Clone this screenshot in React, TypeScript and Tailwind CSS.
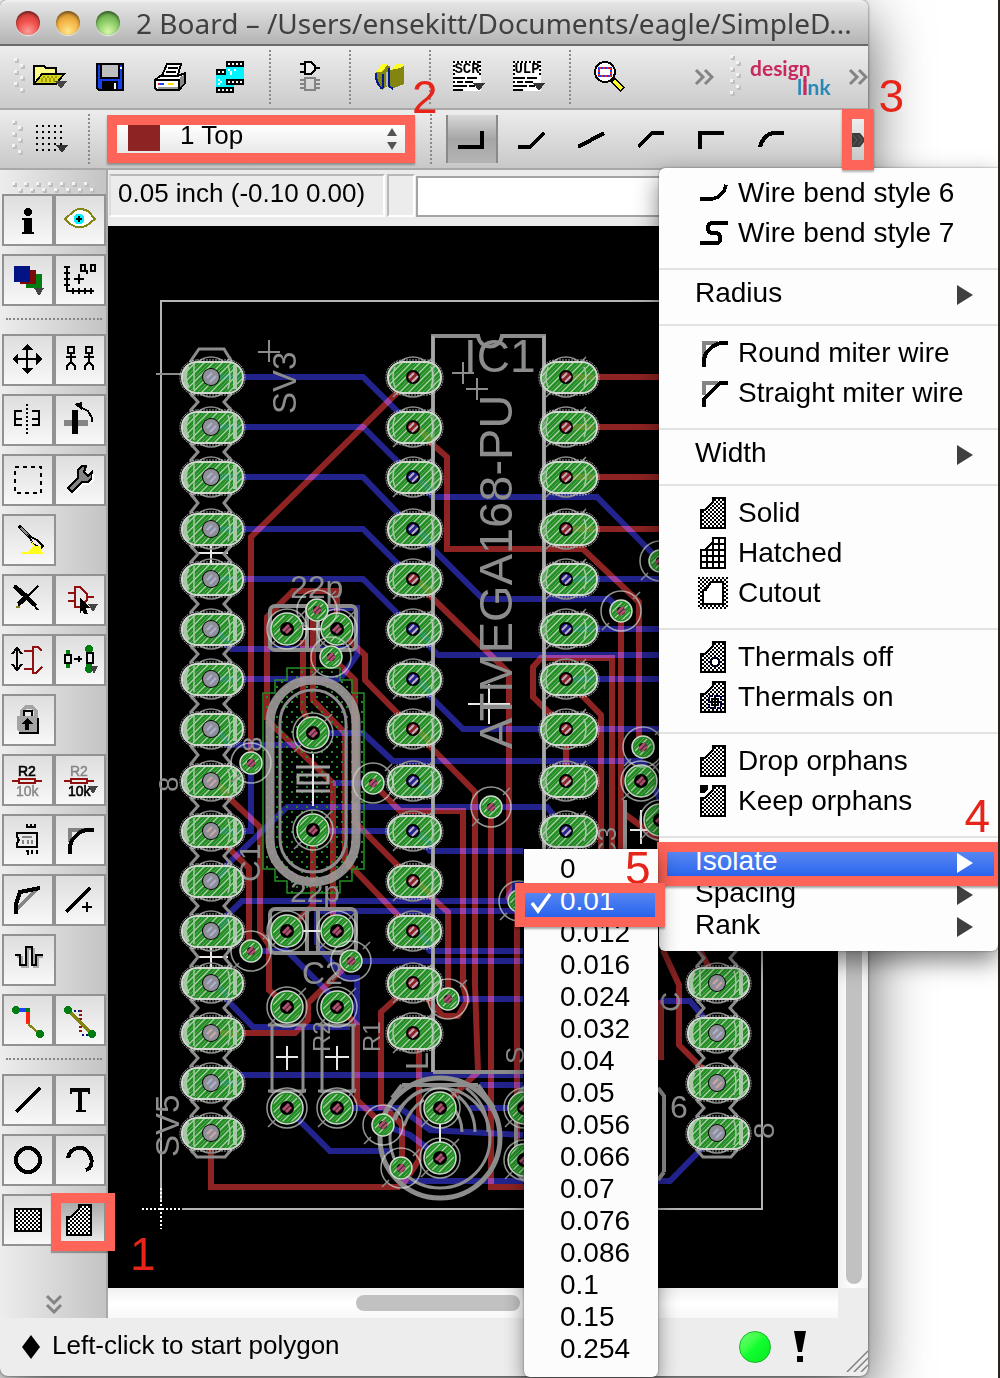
import React from "react";

const BLUE = "#23238e";
const RED = "#8e2323";
const GREEN = "#238e23";
const SILK = "#8c8c8c";
const LIGHT = "#d0d8d0";

function Px({ children, w = 16, h = 16, className = "" }: { children: React.ReactNode; w?: number; h?: number; className?: string }) {
  return (
    <svg width={w * 2} height={h * 2} viewBox={`0 0 ${w} ${h}`} shapeRendering="crispEdges" fill="none" stroke="none" className={className} aria-hidden="true">
      {children}
    </svg>
  );
}

const Drop = () => <path d="M11 12h5l-2.500 4z" fill="#444" />;

/* ---------- top toolbar icons ---------- */

const FolderIcon = () => (
  <Px w={17} h={14}>
    <path d="M.5 10.500V1.500H5.500L6.500 2.500H11.500V5.500" fill="#ffff55" stroke="#000" />
    <path d="M1 10V2H5L6 3H11V5H5z" fill="#ffff88" />
    <path d="M.5 10.500L4.500 5.500H15.500L11.500 10.500z" fill="#d8d820" stroke="#000" />
    <path d="M5 7h1m1 0h1m1 0h1m1 0h1m-8 1h1m1 0h1m1 0h1m1 0h1M4 9h1m1 0h1m1 0h1m1 0h1" stroke="#a0a000" />
    <path d="M11 9h6l-3 4z" fill="#444" />
  </Px>
);
const SaveIcon = () => (
  <Px w={14} h={14}>
    <path d="M.5.5h13v13h-12l-1-1z" fill="#1540f0" stroke="#000" />
    <path d="M3 1h8v6H3z" fill="#c0c0c0" />
    <path d="M2.500 1v6.500h9V1" stroke="#000" />
    <path d="M3 9h8v4H3z" fill="#000" />
    <path d="M9 10h1v3H9z" fill="#fff" />
    <path d="M12 2h1v1h-1z" fill="#fff" />
  </Px>
);
const PrintIcon = () => (
  <Px w={16} h={14}>
    <path d="M3.500 7.500L6.500.5H13.500L11.500 7.500" fill="#fff" stroke="#000" />
    <path d="M7 2.500h5M6 4.500h5M5.500 6.500h4" stroke="#000" />
    <path d="M.5 8.500L3 6.500H12L15.500 5V10L12.500 13.500H1.500L.5 12.500z" fill="#fff" stroke="#000" />
    <path d="M13 7l2-1v4l-2 2z" fill="#888" />
    <path d="M1 8.500h11.500v5" stroke="#000" />
    <path d="M2 10h1v1H2z" fill="#e02020" />
    <path d="M3 10h2v1H3z" fill="#1540f0" />
    <path d="M7 10h3v1H7z" fill="#ffe000" />
    <path d="M2 12.500h10" stroke="#999" />
  </Px>
);
const FilmIcon = () => (
  <Px w={14} h={16}>
    <path d="M5 0h9v3H5zM5 9h9v3H5zM0 4h5v3H0zM0 13h9v3H0z" fill="#000" />
    <path d="M5 3h9v6H5zM0 7h5v6H0zM5 12h4v1H5z" fill="#00f4ff" />
    <path d="M6 1h1v1H6zm2 0h1v1H8zm2 0h1v1h-1zm2 0h1v1h-1zM6 10h1v1H6zm2 0h1v1H8zm2 0h1v1h-1zm2 0h1v1h-1zM1 5h1v1H1zm2 0h1v1H3zM1 14h1v1H1zm2 0h1v1H3zm2 0h1v1H5zm2 0h1v1H7zM6 4h1v1H6zm1 1h1v1H7zm2-1h1v1H9zM1 9h1v1H1zm1 1h1v1H2zm-1 1h1v1H1zm6-5h1v1H7z" fill="#fff" />
  </Px>
);
const GateIcon = () => (
  <Px w={10} h={16}>
    <path d="M0 1.500h3M0 5.500h3M8 3.500h2M2.500.5H5.500L7.500 2.500V4.500L5.500 6.500H2.500z" fill="#eee" stroke="#000" />
    <path d="M2.500 8.500h5v6h-5zM0 9.500h2m-2 2h2m-2 2h2m6-4h2m-2 2h2m-2 2h2" stroke="#848484" />
  </Px>
);
const BooksIcon = () => (
  <Px w={16} h={15}>
    <path d="M1 5L4 1h3v1h1V11L4 14 1 8z" fill="#848410" />
    <path d="M1 5L4 1h3L4 5zM8 4l3-3h4l-2 3z" fill="#ffff22" />
    <path d="M8 4l5-1 2-1v9l-5 2-2-1z" fill="#848410" />
    <path d="M1 5.500V8l1 3 2 2.500M4.500 6v7M7.500 3v9l2 1.500" stroke="#001c8c" />
    <path d="M6 5h1v7H6z" fill="#b8b8b8" />
  </Px>
);
function ScriptIcon({ label }: { label: string }) {
  return (
    <Px w={17} h={16}>
      <path d="M0 0h14v15H0z" fill="#fff" />
      <path d="M.5 0v15M13.500 0v7M0 .5h14" stroke="#000" strokeDasharray="1 1" />
      <text x="7" y="6" textAnchor="middle" fontFamily="Liberation Mono" fontWeight="700" fontSize="7" fill="#000">{label}</text>
      <path d="M1 8.500h5m1 0h5M2 10.500h3m1 0h4M1 12.500h6m1 0h3M1 14.500h4" stroke="#000" />
      <path d="M10 11h6l-3 4z" fill="#333" />
    </Px>
  );
}
const MagnifierIcon = () => (
  <Px w={16} h={16}>
    <circle cx="5.500" cy="5.500" r="5" fill="#fff" stroke="#000" />
    <path d="M2.500 3.500h6v4h-6z" stroke="#1540f0" />
    <path d="M2.500 3.500h6v4h-6z" stroke="#f02020" strokeDasharray="1 1" />
    <path d="M9 9l5.500 5.500" stroke="#000" strokeWidth="3.500" />
    <path d="M10 10l4 4" stroke="#ffff22" strokeWidth="1.800" />
  </Px>
);

function Chevrons({ down = false }: { down?: boolean }) {
  return (
    <svg width={20} height={20} viewBox="0 0 20 20" fill="none" stroke="#848484" strokeWidth="3" className={down ? "rotate-90" : ""} aria-hidden="true">
      <path d="M2 3l7 7-7 7M11 3l7 7-7 7" />
    </svg>
  );
}

function Grip({ rows = 6 }: { rows?: number }) {
  return (
    <svg width={12} height={rows * 6 + 2} viewBox={`0 0 12 ${rows * 6 + 2}`} aria-hidden="true">
      {Array.from({ length: rows }, (_, i) => (
        <g key={i}>
          <rect x={i % 2 ? 7 : 1} y={i * 6 + 1} width="4" height="4" fill="#c0c0c0" />
          <rect x={i % 2 ? 6 : 0} y={i * 6} width="3" height="3" fill="#f4f4f4" />
        </g>
      ))}
    </svg>
  );
}

const VSep = () => (
  <div className="flex w-5 shrink-0 justify-center self-stretch py-1">
    <div className="w-0 border-l-2 border-dotted border-[#8a8a8a]" />
  </div>
);

/* ---------- wire bend icons ---------- */

const bends: { name: string; d: string }[] = [
  { name: "Wire bend style 0", d: "M0 9H12V1" },
  { name: "Wire bend style 1", d: "M0 9H6L13 2" },
  { name: "Wire bend style 2", d: "M0 9L13 2" },
  { name: "Wire bend style 3", d: "M0 9L7 2H13" },
  { name: "Wire bend style 4", d: "M1 10V2H13" },
  { name: "Wire bend style 5", d: "M1 9C2 5 5 2 8 2H13" },
];
function Bend({ d }: { d: string }) {
  return (
    <Px w={14} h={10}>
      <path d={d} stroke="#000" strokeWidth="2" />
    </Px>
  );
}

/* ---------- palette icons ---------- */

const Checker = ({ id }: { id: string }) => (
  <pattern id={id} width="2" height="2" patternUnits="userSpaceOnUse">
    <rect width="2" height="2" fill="#fff" />
    <path d="M0 0h1v1H0zM1 1h1v1H1z" fill="#000" />
  </pattern>
);
const POLY = "M6.500 .5H12.500V15.500H.5V6.500H2.500L6.500 2.500z";

const palette: Record<string, React.ReactNode> = {
  info: <><circle cx="8" cy="4" r="2" fill="#000" /><path d="M5 7h5v7h1v1H5v-1h1V8H5z" fill="#000" /></>,
  show: <><path d="M.5 7.500L5 3.500L7 2.500H9L12 3.500L15.500 7.500L11 11L9 11.500H6L3 10z" fill="#fff" stroke="#848410" /><circle cx="7.500" cy="7.500" r="2.700" fill="#00f0ff" /><path d="M6 7.500h3M7.500 6v3" stroke="#000" /></>,
  display: <><path d="M7 5h8v7H7z" fill="#007c10" /><path d="M4 3h8v7H4z" fill="#7c0808" /><path d="M1 1h8v8H1z" fill="#001484" /><Drop /></>,
  mark: <><path d="M1.500 1v13M1 13.500h14M0 1.500h3M0 4.500h3M0 7.500h3M0 10.500h3M4.500 12v3M7.500 12v3M10.500 12v3M13.500 12v3M5 7.500h5M7.500 5v5M8.500.5h2v3h-2zM13.500.5h2v3h-2zM11.500 3v2" stroke="#000" /></>,
  move: <><path d="M7.500 2v11M2 7.500h11" stroke="#000" /><path d="M7.500 0l3 3h-6zM7.500 15l3-3h-6zM0 7.500l3-3v6zM15 7.500l-3-3v6z" fill="#000" /></>,
  copy: <>{[3, 12].map((x) => <path key={x} d={`M${x - 1} 1.500h3v3h-3zM${x - 2} 6.500h5M${x + 0.5} 5v4M${x + 0.5} 9l-2 2v2M${x + 0.5} 9l2 2v2`} stroke="#000" />)}</>,
  mirror: <><path d="M5 3.500H1.500V10.500H5M2 7.500h3M10 3.500H13.500V10.500H10M13 7.500h-3" stroke="#000" /><path d="M7.500 0v15" stroke="#000" strokeDasharray="1 1" /></>,
  rotate: <><path d="M0 8h12v3H0z" fill="#848484" /><path d="M4 3h3v12H4z" fill="#000" /><path d="M8 1.500L12 3.500L14 7V9" stroke="#000" /><path d="M5 0l4-1v4z" fill="#000" /></>,
  group: <path d="M1.500 1.500h13v13h-13z" stroke="#000" strokeDasharray="2 2" />,
  change: <><path d="M2 12L7 7V3L9 1H11L10 4L12 6L14 4V7L12 9H9L4 14z" fill="#848484" stroke="#000" /><path d="M14.500 5v3l-2 2h-3l-5 5" stroke="#fff" /></>,
  cut: <><path d="M3 1l6 6" stroke="#000" strokeWidth="2" /><path d="M4 2l4 4" stroke="#888" /><path d="M8 6l4 2 3 3-1 1-4-2z" stroke="#000" /><path d="M9 8l2 3h3v3h1v1H4v-1h3l3-3z" fill="#ffff22" /></>,
  del: <><path d="M2 1l6 5 5-5M13 13L8 7l-5 4" stroke="#000" /><path d="M1 1l11 10M3 10l4-4" stroke="#000" strokeWidth="2" /><path d="M2 11h2v1H2z" fill="#848410" /></>,
  add: <><path d="M2 4.500h3M2 8.500h3M12 6.500h3M5.500 1.500H8L11.500 5V8L8 11.500H5.500z" stroke="#901010" /><path d="M8 7l5 5h-2l1 3h-2l-1-2-1 2z" fill="#000" /><path d="M12 10h5l-2.500 4z" fill="#444" /></>,
  pinswap: <><path d="M2.500 3v9M0 5l2.500-3 2.500 3M0 10l2.500 3 2.500-3" stroke="#000" /><path d="M6 3.500h4M6 12.500h4M10.500 1v13M10 1.500h3l2 2M10 14.500h2l3-3" stroke="#901010" /></>,
  replace: <><path d="M1 3h2v9H1zM11 1h3v13h-3z" fill="#007c10" /><circle cx="12.500" cy="2.500" r="2" fill="#007c10" /><circle cx="12.500" cy="12.500" r="2" fill="#007c10" /><path d="M.5 5.500h3v4h-3zM11.500 4.500h3v5h-3z" fill="#eee" stroke="#000" /><path d="M5 7.500h4M7.500 6v3" stroke="#000" /><path d="M13 11h4l-2 4z" fill="#444" /></>,
  lock: <><path d="M3 7h10v8H3z" fill="#000" /><path d="M4.500 7V3.500l2-2h3l2 2V7" stroke="#a4a4a4" strokeWidth="2" /><path d="M2 6h10v8H3l-1-1z" fill="#a4a4a4" /><path d="M5.500 6V3.500H9.500V6" stroke="#000" /><path d="M6 8h2v5H6z" fill="#000" /><path d="M4 10l3-3 3 3z" fill="#000" /></>,
  name: <><text x="3" y="6" fontFamily="Liberation Sans" fontSize="7" fill="#000" stroke="#000" strokeWidth=".3">R2</text><path d="M0 8.500h3M12 8.500h3M3.500 7.500h8v2h-8z" stroke="#901010" /><text x="2" y="16" fontFamily="Liberation Sans" fontSize="7" fill="#848484" stroke="#848484" strokeWidth=".2">10k</text></>,
  value: <><text x="3" y="6" fontFamily="Liberation Sans" fontSize="7" fill="#848484" stroke="#848484" strokeWidth=".2">R2</text><path d="M0 8.500h3M12 8.500h3M3.500 7.500h8v2h-8z" stroke="#901010" /><text x="2" y="16" fontFamily="Liberation Sans" fontSize="7" fill="#000" stroke="#000" strokeWidth=".3">10k</text><path d="M12 11h5l-2.500 4z" fill="#444" /></>,
  smash: <><path d="M2.500 4.500H12.500V11.500H2.500V9.500L3.500 8L2.500 6.500zM7.500 0v1.500h4V0M9.500 0v2M7 13.500h1v2M10 13v2M12.500 13v2" stroke="#000" /><path d="M5 6.500h5M5.500 8v2M8 8v2M10 8v2" stroke="#848484" /></>,
  miter: <><path d="M3 9V3H10" stroke="#848484" strokeWidth="2" /><path d="M3 15V11L4 8L8 4L11 3H15" stroke="#000" strokeWidth="2" /></>,
  split: <><path d="M2 13L13 2" stroke="#848484" strokeWidth="2" /><path d="M2 15V10L4 4L14 2" stroke="#000" strokeWidth="2" /></>,
  optimize: <><path d="M1 14L13 2" stroke="#000" strokeWidth="2" /><path d="M9 11.500h5M11.500 9v5" stroke="#000" /></>,
  meander: <><path d="M2 6.500H4.500V11.500H7.500V2.500H10.500V11.500H12.500V6.500H15" stroke="#aaa" /><path d="M1 5.500H3.500V10.500H6.500V1.500H9.500V10.500H11.500V5.500H15" stroke="#000" /></>,
  route: <><path d="M2 3h6" stroke="#2040ff" strokeWidth="2" /><path d="M8 4v6" stroke="#ff2010" strokeWidth="2" /><path d="M8 10l6 5" stroke="#848410" strokeWidth="1.200" /><circle cx="2" cy="3" r="2" fill="#007c10" /><circle cx="14" cy="15" r="2" fill="#007c10" /><path d="M7 2h2v2H7z" fill="#007c10" /></>,
  ripup: <><path d="M3 3.500h5" stroke="#001484" strokeDasharray="1 1" /><path d="M8 3v12" stroke="#901010" strokeWidth="1.500" strokeDasharray="1 1" /><path d="M9 15.500h4" stroke="#001484" strokeDasharray="1 1" /><path d="M2 3l12 12" stroke="#848410" strokeWidth="1.500" /><circle cx="2" cy="3" r="2" fill="#007c10" /><circle cx="14" cy="15" r="2" fill="#007c10" /></>,
  wire: <path d="M2 14L14 2" stroke="#000" strokeWidth="2" />,
  text: <path d="M3 2h10v3h-1V4H9v9h2v1H6v-1h1V4H4v1H3z" fill="#000" />,
  circle: <circle cx="8" cy="8" r="6" stroke="#000" strokeWidth="2" />,
  arc: <path d="M2 7C3 2 9 0 12 4S14 12 11 13" stroke="#000" strokeWidth="2" />,
  rect: <><defs><Checker id="chk-rect" /></defs><path d="M1.500 2.500h13v11h-13z" fill="url(#chk-rect)" stroke="#000" /></>,
  polygon: <><defs><Checker id="chk-tool" /></defs><g transform="translate(1 0)"><path d={POLY} fill="url(#chk-tool)" stroke="#000" /></g></>,
};

type Row = [string, string | null] | "sep";
const rows: Row[] = [
  ["info", "show"], ["display", "mark"], "sep",
  ["move", "copy"], ["mirror", "rotate"], ["group", "change"], ["cut", null],
  ["del", "add"], ["pinswap", "replace"], ["lock", null], ["name", "value"],
  ["smash", "miter"], ["split", "optimize"], ["meander", null], ["route", "ripup"], "sep",
  ["wire", "text"], ["circle", "arc"], ["rect", "polygon"],
];

function ToolButton({ name }: { name: string }) {
  const active = name === "polygon";
  return (
    <button type="button" aria-label={name} aria-pressed={active}
      className={`relative flex h-[52px] flex-1 items-center justify-center border-2 border-[#929292] ${active ? "bg-gradient-to-b from-[#a0a0a0] to-[#ededed]" : "bg-gradient-to-b from-[#dedede] to-[#f8f8f8]"}`}>
      <Px className="overflow-visible">{palette[name]}</Px>
      {active && <span className="pointer-events-none absolute -bottom-[7px] -left-[5px] -right-[11px] -top-[3px] z-10 border-[10px] border-[#ff6459] shadow-[0_2px_1px_rgba(0,0,0,.3)]" />}
      {active && <span className="pointer-events-none absolute left-[74px] top-[35px] z-10 text-[46px] leading-none text-[#e6241a]">1</span>}
    </button>
  );
}

/* ---------- board drawing ---------- */

const headerY = [377, 427, 477, 529, 579, 629, 679, 729, 781, 831, 881, 931, 983, 1033, 1083, 1133];

const blueTraces = [
  "211,377 363,377 413,427", "211,427 363,427 413,477", "211,477 363,477 413,529", "211,529 363,529 413,579", "211,579 363,579 413,629",
  "413,477 433,497 597,497 660,561", "413,529 483,599 609,599 621,611", "413,629 438,655 670,655", "413,679 463,729 670,729",
  "211,629 231,649 350,649", "211,679 340,679 357,655 357,608 317,608", "211,729 228,745 300,745", "211,831 251,831 251,763",
  "211,881 232,860 287,807 547,807 566,831", "211,931 242,901 520,901", "317,945 317,911 515,911", "317,945 345,978 357,978 357,1025",
  "211,983 253,1027 350,1027", "211,1083 232,1075 523,1075", "287,1108 330,1151 390,1151", "337,1108 400,1108 430,1130 523,1135",
  "313,733 363,733 393,761 643,761", "333,783 373,783", "313,831 413,831 430,851 523,851", "251,951 287,951 337,1001",
  "413,931 430,951 523,951", "351,961 523,961", "448,999 523,999", "566,579 670,579", "566,629 670,629", "566,679 670,679",
  "383,1125 410,1135 430,1150", "480,1085 523,1085", "401,1181 523,1181", "640,1181 670,1181 717,1133", "470,1108 523,1108", "643,761 660,800",
  "660,1001 690,1001 717,1033", "506,901 515,885 523,885",
];
const redTraces = [
  "413,377 251,537 251,763", "413,427 447,457 447,549 583,549 639,602 639,747", "621,611 621,850", "413,579 509,673 509,900",
  "566,679 601,715 601,850", "566,729 533,697 533,667 541,658 612,658 612,850", "566,377 670,377", "566,427 670,427", "566,477 670,477", "566,529 670,529",
  "413,729 475,792 475,985 478,1072 440,1108", "491,807 491,1187 530,1187", "211,1133 211,1187 400,1187", "373,783 400,811 463,811 463,985 467,1001 458,1016 443,1016 413,983",
  "331,657 355,680 355,822 413,881 448,912 448,999", "313,610 313,700 345,733 345,860 413,931", "267,720 333,783 333,931",
  "267,720 267,617 293,591 337,591 337,629", "303,640 303,710 313,733", "337,629 365,655 365,680 413,729",
  "313,831 313,905 287,931", "211,781 260,827 260,932 269,945 269,990 287,1005", "211,831 249,868 249,951", "211,1033 295,1033 308,1020 308,1003 351,961",
  "337,1005 357,1025 357,1100 383,1125", "381,1110 381,1012 413,983", "419,1033 419,1160 401,1187", "383,1105 402,1125 402,1168",
  "517,900 517,1140", "663,950 679,985 679,1045 717,1083", "661,1000 661,1060", "700,950 717,983", "566,729 566,781", "622,812 660,840",
];

/* short stubs of copper that show through a pad: direction in which the trace leaves it */
const exits: Record<string, string> = { right: "h24", down: "l14 14", up: "l14 -14" };

function LongPad({ x, y, w, tint, big, exit, copper }: { x: number; y: number; w: number; tint: string; big?: boolean; exit?: string; copper?: string }) {
  const l = big ? x - 29 : x - 25;
  return (
    <g>
      <ellipse cx={x} cy={y} rx="20" ry="20" fill="none" stroke={SILK} strokeWidth="1.500" />
      <path d={`M${x - 20} ${y + 20}l6-6M${x + 14} ${y - 14}l6-6`} stroke={SILK} strokeWidth="1.500" />
      <rect x={l} y={y - 15} width={w} height="30" rx="14" fill={GREEN} />
      {exit && <path d={`M${x + 4} ${y}${exits[exit]}`} stroke={copper} strokeWidth="6" fill="none" />}
      <rect x={l} y={y - 15} width={w} height="30" rx="14" fill="url(#hatch)" />
      {big && (
        <g fill="none" stroke="#a8c8a8">
          <path d={`M${l + 6} ${y - 11}Q${l} ${y} ${l + 6} ${y + 11}`} strokeWidth="4" />
          <path d={`M${l + w - 8} ${y - 12}V${y + 12}`} strokeWidth="4" />
          <path d={`M${l + 12} ${y - 13}V${y + 13}M${x + 17} ${y - 12}Q${x + 21} ${y} ${x + 17} ${y + 12}`} strokeWidth="1.500" />
        </g>
      )}
      {!big && <path d={`M${x - 18} ${y - 10}Q${x - 22} ${y} ${x - 18} ${y + 10}M${x + 18} ${y - 10}Q${x + 22} ${y} ${x + 18} ${y + 10}`} fill="none" stroke="#a8c8a8" strokeWidth="1.500" />}
      <rect x={l} y={y - 15} width={w} height="31" rx="15" fill="none" stroke={LIGHT} strokeWidth="2" />
      <rect x={l - 2} y={y - 17} width={w + 4} height="35" rx="17" fill="none" stroke={LIGHT} strokeOpacity=".8" strokeWidth="1" strokeDasharray="2 1" />
      <circle cx={x} cy={y} r={big ? 9 : 7} fill="#000" />
      <circle cx={x} cy={y} r={big ? 8 : 5} fill={big ? "#909098" : tint} />
      <path d={`M${x - 4} ${y + 1}l5-5M${x - 1} ${y + 5}l6-6`} stroke={big ? tint : "#c0b0c0"} strokeWidth="2" />
    </g>
  );
}

function RoundPad({ x, y, via }: { x: number; y: number; via?: boolean }) {
  const r = via ? 11 : 16;
  return (
    <g>
      <circle cx={x} cy={y} r={r + (via ? 9 : 4)} fill="none" stroke={LIGHT} strokeOpacity=".7" strokeWidth="1.500" />
      <circle cx={x} cy={y} r={r} fill={GREEN} stroke={LIGHT} strokeWidth="1.500" />
      <circle cx={x} cy={y} r={r - 2} fill="url(#hatch)" />
      <circle cx={x} cy={y} r={via ? 4 : 7} fill="#000" />
      <path d={`M${x - 4} ${y + 2}l6-6M${x - 1} ${y + 4}l5-5`} stroke="#b05070" strokeWidth="3" />
      <path d={`M${x - 19} ${y + 19}l7-7M${x + 12} ${y - 12}l7-7`} stroke={SILK} strokeWidth="1.500" />
    </g>
  );
}

function Waists({ x, ys }: { x: number; ys: number[] }) {
  return (
    <g fill="none" stroke={SILK} strokeWidth="3">
      {ys.slice(0, -1).map((y, i) => {
        const n = ys[i + 1];
        const m = (y + n) / 2;
        return <path key={y} d={`M${x - 21} ${y + 16}L${x - 13} ${m}L${x - 21} ${n - 16}M${x + 21} ${y + 16}L${x + 13} ${m}L${x + 21} ${n - 16}`} />;
      })}
      <path d={`M${x - 21} ${ys[0] - 15}L${x - 12} ${ys[0] - 28}H${x + 13}L${x + 21} ${ys[0] - 15}M${x - 21} ${ys[ys.length - 1] + 16}L${x - 14} ${ys[ys.length - 1] + 24}H${x + 14}L${x + 21} ${ys[ys.length - 1] + 16}`} />
    </g>
  );
}

function Silk({ x, y, size, children, up = true }: { x: number; y: number; size: number; children: string; up?: boolean }) {
  return (
    <text transform={up ? `translate(${x} ${y}) rotate(-90)` : `translate(${x} ${y})`} fontFamily="Liberation Sans" fontSize={size} fill={SILK}>
      {children}
    </text>
  );
}

const TEAL = "#23905a";
const OLIVE = "#5a9023";

function Board() {
  return (
    <svg viewBox="108 226 730 1062" preserveAspectRatio="xMinYMin slice" className="absolute inset-0 h-full w-full bg-black" role="img" aria-label="Board layout">
      <defs>
        <pattern id="hatch" width="9" height="9" patternUnits="userSpaceOnUse">
          <path d="M-1 10L10 -1M-1 1L1 -1M8 10L10 8" stroke="#b0d0b0" strokeWidth="1.300" />
          <path d="M4 10L10 4M-1 6L6 -1" stroke="#58a858" strokeWidth="1" />
        </pattern>
        <pattern id="dots" width="10" height="10" patternUnits="userSpaceOnUse">
          <path d="M1 1h2v2H1zM6 6h2v2H6z" fill={GREEN} />
        </pattern>
      </defs>
      <path d="M161 1200V301H762V1209H182" fill="none" stroke="#b4b4b4" strokeWidth="2" />
      <path d="M142 1209H182M161 1188V1229" stroke="#fff" strokeWidth="2" strokeDasharray="2 2" />

      <g fill="none" strokeWidth="6" style={{ mixBlendMode: "screen" }}>
        {blueTraces.map((p) => <polyline key={p} points={p} stroke={BLUE} />)}
      </g>
      <g fill="none" strokeWidth="6" style={{ mixBlendMode: "screen" }}>
        {redTraces.map((p) => <polyline key={p} points={p} stroke={RED} />)}
      </g>

      <path d="M287 668h53v12h12v13h12v176h-12v12h-12v12h-53v-12h-12v-12h-12V693h12v-13h12z" fill="url(#dots)" stroke={GREEN} strokeWidth="1.500" />
      <rect x="270" y="680" width="86" height="202" rx="43" fill="none" stroke="#a09a9a" strokeWidth="9" strokeOpacity=".9" />
      <rect x="280" y="690" width="66" height="182" rx="33" fill="none" stroke={SILK} strokeWidth="3" />
      <path d="M296 767h34M296 791h34M298 775h30v8h-30z" fill="none" stroke="#a0a0a0" strokeWidth="3" />

      <g fill="none" stroke={SILK} strokeWidth="4">
        <path d="M433 1072V336H478C480 350 500 350 502 336H544V860M433 1072H540" />
        <rect x="270" y="606" width="86" height="44" rx="5" />
        <rect x="270" y="909" width="86" height="44" rx="5" />
        <path d="M307 606v44M318 606v44M307 909v44M318 909v44" />
        <path d="M272 1025v68M303 1025v68M322 1025v68M353 1025v68M268 1025h38M318 1025h38M268 1091h38M318 1091h38" strokeWidth="3" />
        <path d="M402 1085H478M392 1098L402 1085M478 1085L494 1108" strokeWidth="4" />
        <circle cx="440" cy="1138" r="60" strokeWidth="5" />
        <circle cx="440" cy="1138" r="50" strokeWidth="3" />
        <path d="M458 1096q17 14 17 36M466 1088q22 16 22 44M452 1106q10 12 10 26M395 1120q10-24 28-30M404 1126q6-18 20-26" strokeWidth="3" />
        <path d="M516 1172V1096l10-10M664 1172V1096l-6-8M516 1172l10 10M664 1172l-6 8M625 800v50" />
        <path d="M156 374h26M258 352h22M269 340v22M452 373h22M463 362v22M466 389h22M477 378v22" strokeWidth="2" />
      </g>
      <g stroke="#e8e8e8" strokeWidth="2" fill="none">
        <path d="M300 629h22M211 540v28M196 553h32M302 931h22M211 942v28M198 957h30M287 1046v24M276 1057h22M337 1046v24M325 1057h24M468 704h42M489 684v40M440 1120v30M630 830h22M641 810v34M313 754v52" />
      </g>

      <Waists x={211} ys={headerY} />
      <Waists x={717} ys={[933, 983, 1033, 1083, 1133]} />

      <Silk x={296} y={414} size={33}>SV3</Silk>
      <Silk x={179} y={1157} size={33}>SV5</Silk>
      <Silk x={178} y={792} size={28}>8</Silk>
      <Silk x={774} y={1139} size={30}>8</Silk>
      <Silk x={670} y={1118} size={32} up={false}>6</Silk>
      <Silk x={464} y={372} size={46} up={false}>IC1</Silk>
      <Silk x={512} y={749} size={47}>ATMEGA168-PU</Silk>
      <Silk x={290} y={598} size={32} up={false}>22p</Silk>
      <Silk x={290} y={902} size={30} up={false}>22p</Silk>
      <Silk x={302} y={984} size={32} up={false}>C2</Silk>
      <Silk x={330} y={1052} size={24}>R2</Silk>
      <Silk x={380} y={1052} size={24}>R1</Silk>
      <Silk x={262} y={752} size={28}>8</Silk>
      <Silk x={260} y={882} size={30}>C1</Silk>
      <Silk x={428} y={1070} size={32}>L1</Silk>
      <Silk x={616} y={860} size={26}>C3</Silk>
      <Silk x={524} y={1064} size={26}>S</Silk>
      <Silk x={680} y={1012} size={28}>C</Silk>

      {headerY.map((y, i) => (
        <LongPad key={y} x={211} y={y} w={61} big tint={[8, 9, 13, 15].includes(i) ? "#d0a8a8" : "#b0b0d8"}
          exit={[0, 1, 2, 3, 4, 6, 9, 13, 14].includes(i) ? "right" : [10, 11].includes(i) ? "up" : i === 15 ? undefined : "down"} copper={[8, 13].includes(i) ? OLIVE : TEAL} />
      ))}
      {headerY.slice(0, 14).map((y, i) => (
        <LongPad key={y} x={413} y={y} w={53} tint={[2, 3, 5, 6, 8, 9].includes(i) ? BLUE : RED} exit={i > 0 && i < 12 ? "down" : undefined} copper={[1, 4, 7, 10].includes(i) ? OLIVE : TEAL} />
      ))}
      {headerY.slice(0, 10).map((y, i) => (
        <LongPad key={y} x={566} y={y} w={56} tint={[4, 5, 9].includes(i) ? BLUE : RED} exit={i < 7 ? "right" : undefined} copper={i < 4 ? OLIVE : TEAL} />
      ))}
      {[983, 1033, 1083, 1133].map((y, i) => <LongPad key={y} x={717} y={y} w={61} big tint={i % 2 ? "#b0b0d8" : "#d0a8a8"} />)}

      {[[287, 629], [337, 629], [313, 733], [313, 830], [287, 931], [337, 931], [287, 1007], [337, 1007], [287, 1108], [337, 1108], [440, 1108], [440, 1158], [641, 781], [660, 820], [524, 1108], [524, 1160]].map(([x, y]) => (
        <RoundPad key={`${x}-${y}`} x={x} y={y} />
      ))}
      {[[317, 610], [331, 657], [251, 763], [373, 783], [251, 951], [351, 961], [448, 999], [491, 807], [621, 611], [643, 747], [383, 1125], [401, 1168], [660, 561], [519, 901]].map(([x, y]) => (
        <RoundPad key={`${x}-${y}`} x={x} y={y} via />
      ))}
      <path d="M433 336V1072M544 336V860" stroke="#d0d0d0" strokeOpacity=".4" strokeWidth="3" />
    </svg>
  );
}

/* ---------- menus ---------- */

function PolyIcon({ kind }: { kind: string }) {
  const id = `poly-${kind}`;
  return (
    <Px w={15} h={16}>
      <defs>
        <Checker id={id} />
        <pattern id={`${id}-grid`} width="3" height="3" patternUnits="userSpaceOnUse">
          <rect width="3" height="3" fill="#fff" />
          <path d="M0 .5h3M.5 0v3" stroke="#000" />
        </pattern>
      </defs>
      {kind === "cutout" ? (
        <>
          <rect width="15" height="16" fill={`url(#${id})`} />
          <path d="M6.500 2.500H12.500V13.500H2.500V6.500H4z" fill="#fff" stroke="#000" />
        </>
      ) : (
        <path d={POLY} transform="translate(1 0)" fill={kind === "hatched" ? `url(#${id}-grid)` : `url(#${id})`} stroke="#000" />
      )}
      {kind === "off" && <><circle cx="8.500" cy="10.500" r="2" fill="#fff" stroke="#000020" /><path d="M5 10.500h2m3 0h2M8.500 7v2m0 3v2" stroke="#000020" /></>}
      {kind === "on" && <><path d="M5.500 7.500h6v6h-6z" stroke="#000040" strokeDasharray="2 1" /><path d="M6 8h5v5H6z" fill="#fff" /><path d="M6 10.500h5M8.500 8v5M7 9h3v3H7z" stroke="#000" strokeWidth=".8" /></>}
      {kind === "keep" && <path d="M1 0h4v2L3 4H1z" fill="#000" />}
    </Px>
  );
}

const bendSix = <Px w={15} h={10}><path d="M1 8H7L10 7L13 4L14 1" stroke="#000" strokeWidth="1.800" /></Px>;
const bendSeven = <Px w={15} h={13}><path d="M15 1.500H8C4 1.500 4 6 7 6.500H9C12 7 12 11.500 9 11.500H1" stroke="#000" strokeWidth="2" /></Px>;
const roundMiter = <Px w={15} h={14}><path d="M3 9V2H10" stroke="#848484" strokeWidth="2" /><path d="M3 14V10L4 7L7 4L11 2H15" stroke="#000" strokeWidth="2" /></Px>;
const straightMiter = <Px w={15} h={14}><path d="M3 8V2H10" stroke="#848484" strokeWidth="2" /><path d="M3 14V10L11 2H15" stroke="#000" strokeWidth="2" /></Px>;

type Item = { label: string; icon?: React.ReactNode; selected?: boolean };
const groups: Item[][] = [
  [{ label: "Wire bend style 6", icon: bendSix }, { label: "Wire bend style 7", icon: bendSeven }],
  [{ label: "Radius" }],
  [{ label: "Round miter wire", icon: roundMiter }, { label: "Straight miter wire", icon: straightMiter }],
  [{ label: "Width" }],
  [{ label: "Solid", icon: <PolyIcon kind="solid" /> }, { label: "Hatched", icon: <PolyIcon kind="hatched" /> }, { label: "Cutout", icon: <PolyIcon kind="cutout" /> }],
  [{ label: "Thermals off", icon: <PolyIcon kind="off" /> }, { label: "Thermals on", icon: <PolyIcon kind="on" /> }],
  [{ label: "Drop orphans", icon: <PolyIcon kind="drop" /> }, { label: "Keep orphans", icon: <PolyIcon kind="keep" /> }],
  [{ label: "Isolate", selected: true }, { label: "Spacing" }, { label: "Rank" }],
];

const isolateValues = ["0", "0.01", "0.012", "0.016", "0.024", "0.032", "0.04", "0.05", "0.056", "0.066", "0.07", "0.076", "0.086", "0.1", "0.15", "0.254"];

function WireMenu() {
  return (
    <div role="menu" aria-label="More options" className="absolute right-0 top-[168px] z-20 w-[339px] rounded-md rounded-tr-none bg-[#fdfdfd] pb-[10px] pt-[5px] text-[28px] shadow-[0_10px_24px_rgba(0,0,0,.5),0_0_2px_rgba(0,0,0,.5)]">
      {groups.map((g, gi) => (
        <div key={gi} role="group">
          {gi > 0 && <div className="mb-[7px] mt-[15px] h-[2px] bg-[#e2e2e2]" />}
          {g.map((it) =>
            it.icon ? (
              <button key={it.label} type="button" role="menuitem" className="flex h-10 w-full items-center text-left leading-none text-black">
                <span className="ml-[39px] flex w-10 shrink-0 items-center">{it.icon}</span>
                {it.label}
              </button>
            ) : (
              <button key={it.label} type="button" role="menuitem" className={`relative flex h-8 w-full items-center justify-between pl-9 pr-6 text-left leading-none ${it.selected ? "bg-gradient-to-b from-[#6490f2] to-[#2863ee] text-white" : "text-black"}`}>
                {it.label}
                <svg width="18" height="20" viewBox="0 0 18 20" className="mt-1" aria-hidden="true"><path d="M1 0L17 10L1 20z" fill={it.selected ? "#fff" : "#404040"} /></svg>
                {it.selected && (
                  <>
                    <span className="pointer-events-none absolute -bottom-[9px] -left-[2px] -right-[6px] -top-[3px] z-10 border-[10px] border-[#ff6459] shadow-[0_2px_2px_rgba(0,0,0,.35)]" />
                    <span className="pointer-events-none absolute -top-[52px] right-[8px] z-10 text-[46px] leading-none text-[#e6241a]">4</span>
                  </>
                )}
              </button>
            )
          )}
        </div>
      ))}
    </div>
  );
}

function IsolateMenu() {
  return (
    <div role="menu" aria-label="Isolate" className="absolute right-[340px] top-[849px] z-30 w-[134px] rounded-b-md bg-[#fcfcfc] pb-3 pt-1 text-[28px] text-black shadow-[0_8px_20px_rgba(0,0,0,.45),0_0_2px_rgba(0,0,0,.5)]">
      <span className="pointer-events-none absolute -top-[4px] left-[101px] text-[46px] leading-none text-[#e6241a]">5</span>
      {isolateValues.map((v) => {
        const on = v === "0.01";
        return (
          <button key={v} type="button" role="menuitemradio" aria-checked={on} className={`relative flex h-8 w-full items-center pl-9 text-left leading-none ${on ? "bg-gradient-to-b from-[#6490f2] to-[#2863ee] text-white" : ""}`}>
            {on && <svg width="22" height="22" viewBox="0 0 22 22" fill="none" stroke="#fff" strokeWidth="3.500" className="absolute left-[6px] top-[7px]" aria-hidden="true"><path d="M2 11l6 8L20 2" /></svg>}
            {v}
            {on && <span className="pointer-events-none absolute -bottom-[10px] -left-[9px] -right-[7px] -top-[2px] z-10 border-[10px] border-[#ff6459] shadow-[0_2px_2px_rgba(0,0,0,.35)]" />}
          </button>
        );
      })}
    </div>
  );
}

const lights: { label: string; cls: string }[] = [
  { label: "Close", cls: "bg-[radial-gradient(circle_at_50%_85%,#ff9d98_0%,#f0504b_45%,#b8332f_100%)]" },
  { label: "Minimize", cls: "bg-[radial-gradient(circle_at_50%_85%,#ffe68a_0%,#f4b548_45%,#b97a1d_100%)]" },
  { label: "Zoom", cls: "bg-[radial-gradient(circle_at_50%_85%,#d8f7a8_0%,#8ccc68_45%,#4d8f35_100%)]" },
];

const topTools: ([string, React.ReactNode] | null)[] = [
  ["Open", <FolderIcon />], ["Save", <SaveIcon />], ["Print", <PrintIcon />], ["CAM", <FilmIcon />], null,
  ["Schematic", <GateIcon />], null, ["Library", <BooksIcon />], null,
  ["Script", <ScriptIcon label="SCR" />], ["ULP", <ScriptIcon label="ULP" />], null, ["Zoom to fit", <MagnifierIcon />],
];

export default function App() {
  return (
    <div className="relative min-h-screen overflow-hidden border-r-2 border-[#2a2420] bg-white pb-[2px] pr-[130px] font-['Liberation_Sans',sans-serif]">
      <div className="relative flex min-h-[calc(100vh-2px)] flex-col rounded-b-lg rounded-t-lg bg-[#ededed] shadow-[0_20px_60px_rgba(0,0,0,.65),0_0_3px_rgba(0,0,0,.6)]">
        <header className="flex h-[46px] items-center gap-4 overflow-hidden rounded-t-lg border-b-2 border-t-2 border-b-[#6a6a6a] border-t-[#eee] bg-gradient-to-b from-[#e6e6e6] to-[#b4b4b4] pl-4">
          {lights.map((l) => (
            <button key={l.label} type="button" aria-label={l.label} className={`h-6 w-6 shrink-0 rounded-full shadow-[inset_0_2px_3px_rgba(0,0,0,.45),0_1px_1px_rgba(255,255,255,.7)] ${l.cls}`} />
          ))}
          <h1 className="whitespace-nowrap font-['Noto_Sans',sans-serif] text-[28px] leading-none text-[#404040]">2 Board – /Users/ensekitt/Documents/eagle/SimpleD...</h1>
        </header>

        <div className="flex h-16 items-center border-b-2 border-[#a9a9a9] bg-gradient-to-b from-[#ededed] to-[#cbcbcb]">
          <div className="-mr-[6px] flex w-[26px] shrink-0 justify-end"><Grip /></div>
          {topTools.map((t, i) =>
            t ? (
              <button key={t[0]} type="button" aria-label={t[0]} className="flex h-14 w-[60px] shrink-0 items-center justify-center">{t[1]}</button>
            ) : (
              <VSep key={i} />
            )
          )}
          <div className="ml-auto flex shrink-0 items-center">
            <button type="button" aria-label="More tools" className="mr-4"><Chevrons /></button>
            <Grip rows={7} />
            <a href="#designlink" aria-label="design link" className="ml-2">
              <svg width="84" height="46" viewBox="0 0 84 46" fontFamily="Lato" fontWeight="700" aria-hidden="true">
                <text x="0" y="22" fontSize="21" fill="#c8285c">design</text>
                <text x="47" y="41" fontSize="21" fill="#2888b8">link</text>
                <path d="M55 22v19" stroke="#c8285c" strokeWidth="3" />
              </svg>
            </a>
            <button type="button" aria-label="More" className="ml-[14px]"><Chevrons /></button>
          </div>
        </div>

        <div className="relative flex h-[60px] items-center border-b-2 border-[#a9a9a9] bg-gradient-to-b from-[#ededed] to-[#c8c8c8]">
          <div className="flex w-6 shrink-0 justify-end pl-3"><Grip /></div>
          <button type="button" aria-label="Grid" className="ml-2 shrink-0">
            <Px w={18} h={16}>
              {[1.5, 4.5, 7.5, 10.5, 13.5].map((y) => <path key={y} d={`M2 ${y}h14`} stroke="#000" strokeDasharray="1 2" />)}
              <path d="M12 11h6l-3 4z" fill="#333" />
            </Px>
          </button>
          <div className="ml-[11px] flex self-stretch"><VSep /></div>
          <div className="relative ml-2 flex h-12 w-[308px] shrink-0 items-start overflow-hidden border-[10px] border-[#ff6459] bg-gradient-to-b from-white to-[#e8e8e8] shadow-[0_2px_2px_rgba(0,0,0,.3)]">
            <span className="ml-[11px] h-[26px] w-8 bg-[#8e2323]" />
            <label htmlFor="layer" className="sr-only">Layer</label>
            <select id="layer" className="-mt-2 h-9 flex-1 appearance-none bg-transparent pl-5 text-[26px] leading-8 text-black outline-none">
              <option>1 Top</option>
            </select>
            <svg width="12" height="24" viewBox="0 0 12 24" className="pointer-events-none absolute right-[7px] top-[2px]" aria-hidden="true"><path d="M1 9l5-8 5 8zM1 15l5 8 5-8z" fill="#555" /></svg>
          </div>
          <span className="pointer-events-none absolute -top-[36px] left-[412px] text-[46px] leading-none text-[#e6241a]">2</span>
          <div className="ml-[6px] flex self-stretch"><VSep /></div>
          <div className="flex items-center gap-2">
            {bends.map((b, i) => (
              <button key={b.name} type="button" aria-label={b.name} aria-pressed={i === 0}
                className={`flex h-12 w-[52px] items-center justify-center ${i === 0 ? "ml-[5px] border-x-2 border-[#8a8a8a] bg-gradient-to-b from-[#d8d8d8] via-[#a6a6a6] to-[#b4b4b4]" : ""}`}>
                <Bend d={b.d} />
              </button>
            ))}
          </div>
          <button type="button" aria-label="More wire options" className="absolute -right-[6px] -top-[1px] z-30 flex h-[61px] w-8 items-center justify-center border-[10px] border-[#ff6459] bg-gradient-to-b from-[#ededed] to-[#c8c8c8] shadow-[0_2px_2px_rgba(0,0,0,.3)]">
            <svg width="12" height="14" viewBox="0 0 12 14" aria-hidden="true"><path d="M0 0H8L12 5V9L8 14H0z" fill="#3c3c3c" /><path d="M1 2l4 5-4 5M6 2l4 5-4 5" fill="none" stroke="#606060" /></svg>
          </button>
          <span className="pointer-events-none absolute -right-[36px] -top-[37px] text-[46px] leading-none text-[#e6241a]">3</span>
        </div>

        <div className="flex flex-1">
          <aside className="flex w-[108px] shrink-0 flex-col border-r-2 border-[#a9a9a9] bg-gradient-to-r from-[#ededed] to-[#c4c4c4] pl-[2px]">
            <div className="flex h-6 items-center justify-center pt-3">
              <svg width="84" height="12" viewBox="0 0 84 12" aria-hidden="true">
                {Array.from({ length: 14 }, (_, i) => (
                  <g key={i}><rect x={i * 6 + 1} y={i % 2 ? 7 : 1} width="4" height="4" fill="#bcbcbc" /><rect x={i * 6} y={i % 2 ? 6 : 0} width="3" height="3" fill="#f4f4f4" /></g>
                ))}
              </svg>
            </div>
            {rows.map((r, i) =>
              r === "sep" ? (
                <div key={i} className="h-5 px-1 pt-[4px]"><div className="border-t-2 border-dotted border-[#868686]" /></div>
              ) : (
                <div key={i} className="mb-2 flex">
                  <ToolButton name={r[0]} />
                  {r[1] ? <ToolButton name={r[1]} /> : <div className="flex-1" />}
                </div>
              )
            )}
            <button type="button" aria-label="More tools" className="mt-10 flex justify-center"><Chevrons down /></button>
          </aside>

          <div className="flex min-w-0 flex-1 flex-col">
            <div className="flex h-14 items-start bg-[#ececec] pt-1">
              <output className="ml-[1px] h-[43px] w-[276px] shrink-0 border-2 border-b-white border-l-[#ddd] border-r-white border-t-[#b8b8b8] pl-[7px] text-[26px] leading-[34px] text-black">0.05 inch (-0.10 0.00)</output>
              <div className="ml-[2px] h-[43px] w-7 shrink-0 border-2 border-b-white border-l-[#b8b8b8] border-r-white border-t-[#b8b8b8]" />
              <input aria-label="Command" className="ml-[1px] mt-[2px] h-[41px] min-w-0 flex-1 border-2 border-[#a4a4a4] bg-white px-2 text-[26px] outline-none" />
            </div>
            <div className="flex flex-1">
              <main className="relative min-w-0 flex-1 overflow-hidden bg-black"><Board /></main>
              <div className="flex w-[30px] shrink-0 flex-col justify-end bg-gradient-to-r from-[#f0f0f0] via-white to-[#f4f4f4] pb-1 pl-2">
                <div className="h-[90%] w-4 rounded-full bg-[#c1c1c1]" />
              </div>
            </div>
            <div className="flex h-[30px]">
              <div className="flex flex-1 items-center bg-gradient-to-b from-[#f0f0f0] via-white to-[#f8f8f8] pl-[248px]">
                <div className="h-4 w-[164px] rounded-full bg-[#c1c1c1]" />
              </div>
              <div className="w-[30px]" />
            </div>
          </div>
        </div>

        <footer className="relative flex h-[58px] items-center pl-5 text-[26px] text-black">
          <svg width="22" height="26" viewBox="0 0 20 26" className="mr-[10px]" aria-hidden="true"><path d="M10 1L19 13L10 25L1 13z" fill="#000" /></svg>
          <span className="pb-1 leading-none">Left-click to start polygon</span>
          <span className="ml-auto mr-[22px] h-8 w-8 rounded-full border border-[#10b820] bg-gradient-to-br from-[#6cff70] via-[#10ff30] to-[#08e820]" />
          <svg width="14" height="32" viewBox="0 0 14 32" className="mr-[61px]" role="img" aria-label="Alert"><path d="M1 0h12L9 21H5zM4 25h6v6H4z" fill="#000" /></svg>
          <svg width="22" height="22" viewBox="0 0 22 22" className="absolute bottom-1 right-0" stroke="#808080" strokeWidth="1.500" aria-hidden="true"><path d="M1 22L22 1M8 22L22 8M15 22L22 15" /></svg>
        </footer>
      </div>

      <WireMenu />
      <IsolateMenu />
    </div>
  );
}
